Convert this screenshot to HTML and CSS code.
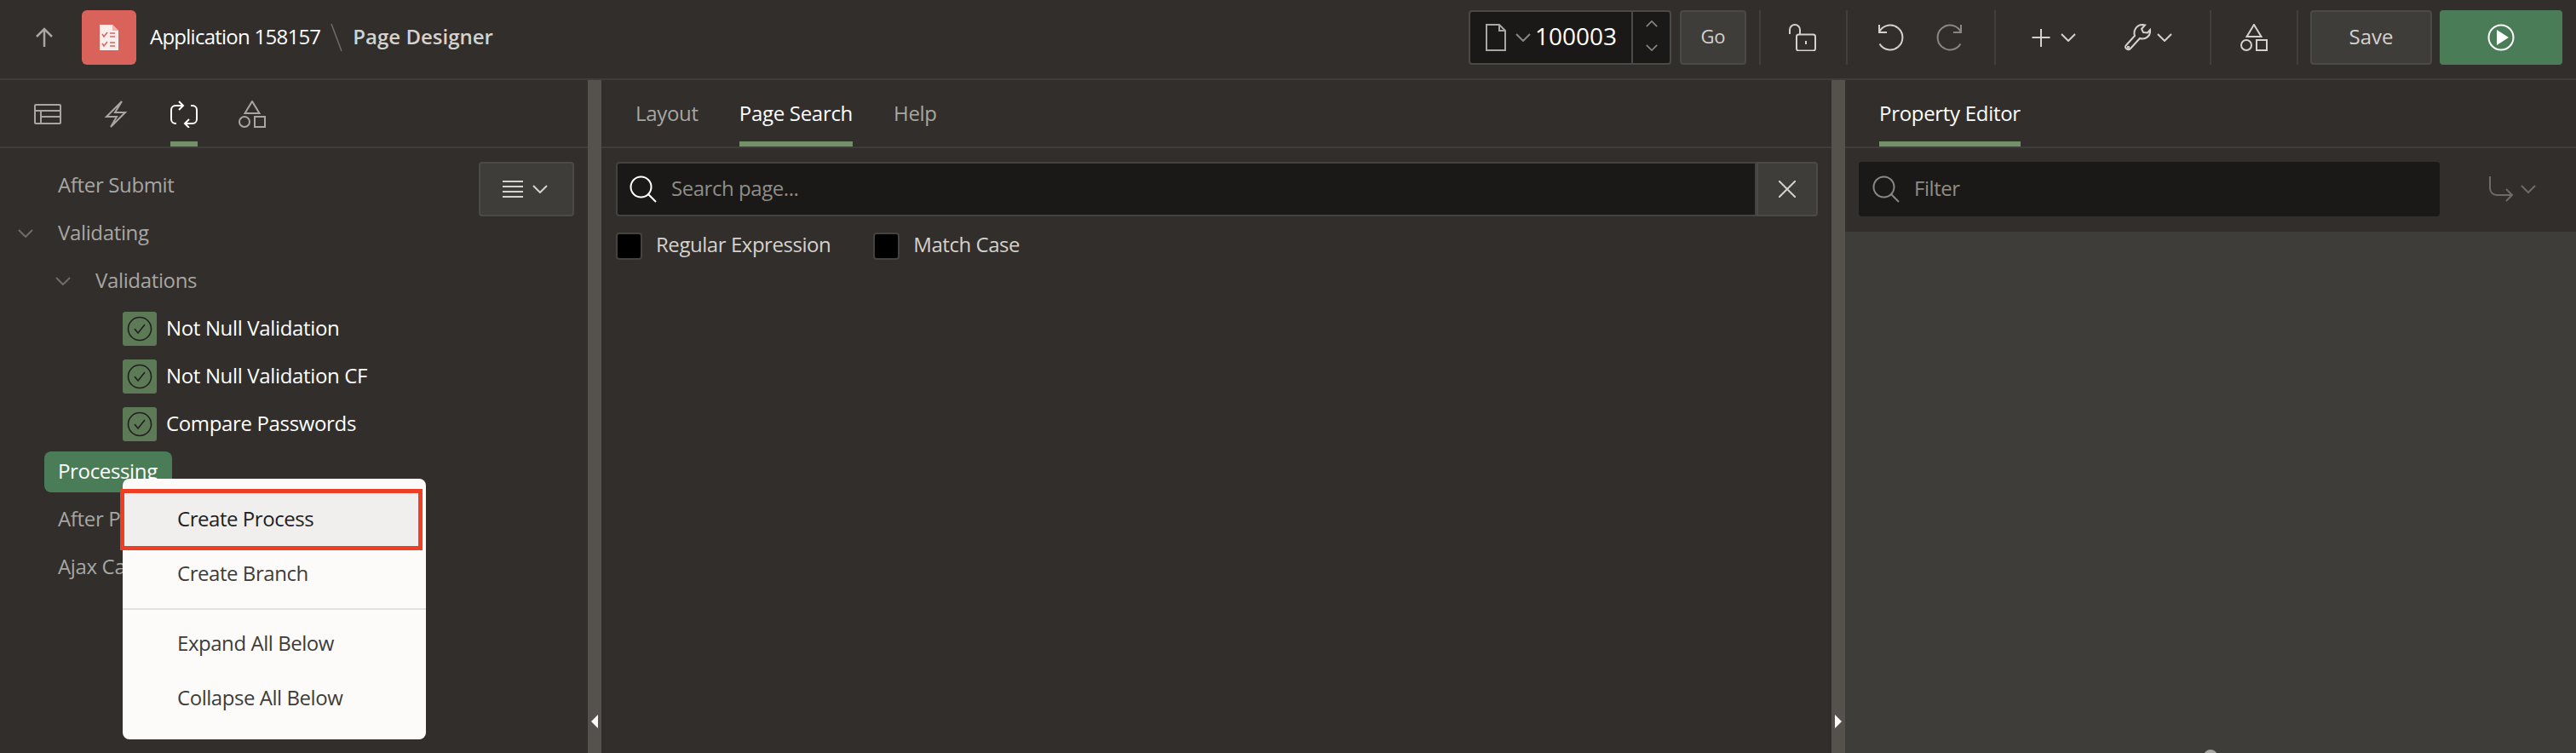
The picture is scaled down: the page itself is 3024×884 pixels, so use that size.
FILE: index.html
```html
<!DOCTYPE html>
<html lang="en">
<head>
  <meta charset="UTF-8">
  <title>Page Designer</title>
  <link rel="stylesheet" href="styles.css">
</head>
<body>

  <svg class="sprite" xmlns="http://www.w3.org/2000/svg">
    <symbol id="chev-down" viewBox="0 0 18 10"><path d="M1 1l8 8 8-8"/></symbol>
    <symbol id="search" viewBox="0 0 32 32"><circle cx="13.5" cy="13.5" r="12"/><path d="M22 22l9 9"/></symbol>
    <symbol id="shapes" viewBox="0 0 32 32"><path d="M16 1l8.500 14h-17z"/><circle cx="7" cy="25" r="6"/><rect x="19" y="19" width="12" height="12"/></symbol>
  </svg>

  <!-- top bar -->
  <header class="topbar">
    <svg class="ico up-arrow" viewBox="0 0 32 32"><path d="M16 6v21M7 15l9-9 9 9"/></svg>
    <div class="app-logo">
      <svg width="24" height="32" viewBox="0 0 24 32">
        <path class="logo-page" d="M1 1h15l7 7v23H1z"/>
        <path class="logo-fold" d="M16 1l7 7h-7z"/>
        <path class="logo-mark" d="M4 12l2 3 4-5M4 23l2 3 4-5M13 11h6M13 15h6M13 22h6M13 26h6"/>
      </svg>
    </div>
    <a class="crumb lbl">Application 158157</a>
    <svg class="crumb-sep" viewBox="0 0 14 32"><path d="M1 0l12 32"/></svg>
    <span class="crumb-current lbl">Page Designer</span>

    <div class="toolbar">
      <div class="page-select">
        <svg class="ico doc-ico" viewBox="0 0 24 32"><path d="M1 1h15l7 7v23H1zM16 1v7h7"/></svg>
        <svg class="chev"><use href="#chev-down"/></svg>
        <span class="page-num lbl">100003</span>
        <div class="stepper">
          <svg class="chev-sm up"><use href="#chev-down"/></svg>
          <svg class="chev-sm"><use href="#chev-down"/></svg>
        </div>
      </div>
      <button class="btn btn-go"><span class="lbl">Go</span></button>
      <span class="tool-sep first"></span>
      <div class="tool tool-lock">
        <svg class="ico" viewBox="0 0 32 32"><path d="M1 12V7a6 6 0 0 1 12 0v5"/><rect x="9" y="12.500" width="22" height="19" rx="2.500"/><path d="M20 20v4"/></svg>
      </div>
      <span class="tool-sep"></span>
      <div class="tool tool-undo">
        <svg class="ico" viewBox="0 0 32 32"><path d="M3 1v9h9"/><path d="M3.500 8.500A14.500 14.500 0 1 1 3.500 23.500"/></svg>
      </div>
      <div class="tool tool-redo">
        <svg class="ico dim" viewBox="0 0 32 32"><path d="M29 1v9h-9"/><path d="M28.500 8.500A14.500 14.500 0 1 0 28.500 23.500"/></svg>
      </div>
      <span class="tool-sep"></span>
      <div class="tool tool-add">
        <svg class="ico" viewBox="0 0 32 32"><path d="M16 6v21M5.500 16h21"/></svg>
        <svg class="chev"><use href="#chev-down"/></svg>
      </div>
      <div class="tool tool-wrench">
        <svg class="ico" viewBox="0 0 32 32"><path d="M3 25l10-11c-2-6 2-13 9-13l3 .5-4 4.500 2 4 5 .5 3-3.500c1 7-5 12-12 10L8 29c-3 3-8-1-5-4z"/><circle cx="5.500" cy="27.500" r=".8"/></svg>
        <svg class="chev"><use href="#chev-down"/></svg>
      </div>
      <span class="tool-sep"></span>
      <div class="tool tool-shapes">
        <svg class="ico"><use href="#shapes"/></svg>
      </div>
      <span class="tool-sep"></span>
      <button class="btn btn-save"><span class="lbl">Save</span></button>
      <button class="btn btn-run">
        <svg width="32" height="32" viewBox="0 0 32 32"><circle class="run-ring" cx="16" cy="16" r="14.500"/><path class="run-tri" d="M11 7l14 9-14 9z"/></svg>
      </button>
    </div>
  </header>

  <main class="designer">

    <!-- left panel -->
    <section class="panel panel-left">
      <div class="tabs">
        <div class="tab tab-ico">
          <svg class="ico" viewBox="0 0 32 24"><rect x="1" y="1" width="30" height="22" rx="1"/><path d="M1 8h30M8 8v15M8 15h23"/></svg>
        </div>
        <div class="tab tab-ico">
          <svg class="ico" viewBox="0 0 24 32"><path d="M19 1L1 19h12L6 31l17-17H11z"/></svg>
        </div>
        <div class="tab tab-ico active">
          <svg class="ico ico-on" viewBox="0 0 32 32"><path d="M15 6H6a5 5 0 0 0-5 5v11a5 5 0 0 0 5 5h1M10 1l5 5-5 5M24 6h2a5 5 0 0 1 5 5v11a5 5 0 0 1-5 5h-9M22 22l-5 5 5 5"/></svg>
        </div>
        <div class="tab tab-ico">
          <svg class="ico"><use href="#shapes"/></svg>
        </div>
      </div>

      <div class="tree">
        <div class="tree-row lvl0"><span class="lbl">After Submit</span></div>
        <div class="tree-row lvl0 has-kids"><svg class="chev tree-chev"><use href="#chev-down"/></svg><span class="lbl">Validating</span></div>
        <div class="tree-row lvl1"><svg class="chev tree-chev"><use href="#chev-down"/></svg><span class="lbl">Validations</span></div>
        <div class="tree-row lvl2">
          <span class="val-ico"><svg viewBox="0 0 30 30" width="30" height="30"><circle cx="15" cy="15" r="13.500"/><path d="M9 15l4 5 8-10"/></svg></span><span class="lbl">Not Null Validation</span>
        </div>
        <div class="tree-row lvl2">
          <span class="val-ico"><svg viewBox="0 0 30 30" width="30" height="30"><circle cx="15" cy="15" r="13.500"/><path d="M9 15l4 5 8-10"/></svg></span><span class="lbl">Not Null Validation CF</span>
        </div>
        <div class="tree-row lvl2">
          <span class="val-ico"><svg viewBox="0 0 30 30" width="30" height="30"><circle cx="15" cy="15" r="13.500"/><path d="M9 15l4 5 8-10"/></svg></span><span class="lbl">Compare Passwords</span>
        </div>
        <div class="tree-row"><div class="tree-selected"><span class="lbl">Processing</span></div></div>
        <div class="tree-row lvl0"><span class="lbl">After Processing</span></div>
        <div class="tree-row lvl0"><span class="lbl">Ajax Callbacks</span></div>
      </div>

      <button class="btn tree-menu-btn">
        <svg width="24" height="20" viewBox="0 0 24 20"><path d="M0 1h24M0 7h24M0 13h24M0 19h24"/></svg>
        <svg class="chev"><use href="#chev-down"/></svg>
      </button>

      <div class="ctx-menu">
        <div class="ctx-item focus"><span class="lbl">Create Process</span></div>
        <div class="ctx-item"><span class="lbl">Create Branch</span></div>
        <div class="ctx-divider"></div>
        <div class="ctx-item"><span class="lbl">Expand All Below</span></div>
        <div class="ctx-item"><span class="lbl">Collapse All Below</span></div>
      </div>
    </section>

    <div class="splitter"><span class="arrow-left"></span></div>

    <!-- middle panel -->
    <section class="panel panel-mid">
      <div class="tabs">
        <div class="tab"><span class="lbl">Layout</span></div>
        <div class="tab active"><span class="lbl">Page Search</span></div>
        <div class="tab"><span class="lbl">Help</span></div>
      </div>
      <div class="search-wrap">
        <div class="search-row">
          <div class="search-field">
            <svg class="ico search-ico"><use href="#search"/></svg>
            <span class="placeholder lbl">Search page...</span>
          </div>
          <button class="btn btn-clear">
            <svg class="ico" width="20" height="20" viewBox="0 0 20 20"><path d="M0 0l20 20M20 0L0 20"/></svg>
          </button>
        </div>
        <div class="check-row">
          <label class="check"><span class="check-box"></span><span class="lbl">Regular Expression</span></label>
          <label class="check"><span class="check-box"></span><span class="lbl">Match Case</span></label>
        </div>
      </div>
    </section>

    <div class="splitter"><span class="arrow-right"></span></div>

    <!-- right panel -->
    <section class="panel panel-right">
      <div class="tabs">
        <div class="tab active"><span class="lbl">Property Editor</span></div>
      </div>
      <div class="filter-bar">
        <div class="filter-field">
          <svg class="ico filter-ico"><use href="#search"/></svg>
          <span class="placeholder lbl">Filter</span>
        </div>
        <div class="filter-go">
          <svg class="ico" width="28" height="30" viewBox="0 0 28 30"><path d="M1 0v14a8 8 0 0 0 8 8h18M20 15l7 7-7 7"/></svg>
          <svg class="chev"><use href="#chev-down"/></svg>
        </div>
      </div>
      <div class="prop-body"></div>
      <span class="float-dot"></span>
    </section>

  </main>

</body>
</html>
```

FILE: styles.css
```css
* {
  box-sizing: border-box;
}

html, body {
  margin: 0;
  height: 100%;
  overflow: hidden;
}

body {
  background-color: #312e2b;
  color: #d4d2cf;
  font-family: "Open Sans", "Noto Sans", sans-serif;
  font-size: 24px;
  letter-spacing: -0.45px;
  display: flex;
  flex-direction: column;
}

.sprite {
  display: none;
}

/* the font sits a little low in its line box */
.lbl {
  margin-bottom: 4px;
}

/* Icons */
.ico {
  width: 32px;
  height: 32px;
  fill: none;
  stroke: #d4d2cf;
  stroke-width: 2;
  flex: none;
}

.ico.dim {
  stroke: #8a8884;
}

.chev {
  width: 18px;
  height: 10px;
  fill: none;
  stroke: #d4d2cf;
  stroke-width: 2;
  flex: none;
}

/* Top bar */
.topbar {
  height: 94px;
  flex: none;
  display: flex;
  align-items: center;
  padding: 0 16px 4px 0;
  border-bottom: 2px solid #3f3d39;
}

.up-arrow {
  stroke: #a8a6a2;
  stroke-width: 2.5;
  margin: 0 28px 0 36px;
}

.app-logo {
  width: 64px;
  height: 64px;
  border-radius: 6px;
  background-color: #d9635a;
  display: flex;
  align-items: center;
  justify-content: center;
  margin-right: 16px;
}

.logo-page {
  fill: #fbeeec;
}

.logo-fold {
  fill: #e8b4ae;
}

.logo-mark {
  fill: none;
  stroke: #d9635a;
  stroke-width: 1.5;
}

.crumb {
  color: #fff;
  letter-spacing: -0.75px;
}

.crumb-sep {
  width: 14px;
  height: 32px;
  margin: 0 12px;
  fill: none;
  stroke: #6f6d69;
  stroke-width: 1.5;
}

.crumb-current {
  font-weight: 600;
  letter-spacing: 0;
}

.toolbar {
  margin-left: auto;
  display: flex;
  align-items: center;
  height: 64px;
}

.btn {
  height: 64px;
  border-radius: 4px;
  border: 2px solid #4c4a46;
  background-color: #3f3d39;
  color: #d4d2cf;
  font-family: inherit;
  font-size: 24px;
  padding: 0;
  display: flex;
  align-items: center;
  justify-content: center;
}

.page-select {
  width: 238px;
  height: 64px;
  display: flex;
  align-items: center;
  padding-left: 18px;
  border: 2px solid #4c4a46;
  border-radius: 4px;
  background-color: #1a1917;
}

.doc-ico {
  width: 24px;
  stroke: #a8a6a2;
  margin-right: 11px;
}

.page-select .chev {
  stroke: #8a8884;
  margin-right: 5px;
}

.page-num {
  color: #fff;
  font-size: 28px;
  letter-spacing: 0;
  width: 113px;
}

.stepper {
  align-self: stretch;
  flex: 1;
  border-left: 2px solid #4c4a46;
  padding-bottom: 4px;
  display: flex;
  flex-direction: column;
  align-items: center;
  justify-content: center;
  gap: 20px;
}

.chev-sm {
  width: 14px;
  height: 8px;
  fill: none;
  stroke: #8a8884;
  stroke-width: 2;
}

.chev-sm.up {
  transform: scaleY(-1);
}

.btn-go {
  width: 78px;
  margin-left: 10px;
  font-size: 22px;
}

.tool-sep {
  width: 2px;
  height: 64px;
  background-color: #413f3b;
  flex: none;
}

.tool-sep.first {
  margin-left: 15px;
}

.tool {
  display: flex;
  align-items: center;
  height: 64px;
}

.tool .chev {
  margin-left: 7px;
}

.tool-lock {
  padding: 0 35px 0 33px;
}

.tool-undo {
  padding: 0 20px 0 34px;
}

.tool-redo {
  padding: 0 36px 0 18px;
}

.tool-add {
  padding: 0 0 0 37px;
}

.tool-wrench {
  padding: 0 44px 0 56px;
}

.tool-shapes {
  padding: 0 34px;
}

.btn-save {
  width: 143px;
  margin-left: 14px;
}

.btn-run {
  width: 144px;
  margin-left: 9px;
  border: none;
  background-color: #4a7d57;
}

.run-ring {
  fill: none;
  stroke: #fff;
  stroke-width: 2;
}

.run-tri {
  fill: #fff;
}

/* Panels */
.designer {
  flex: 1;
  display: flex;
  min-height: 0;
}

.panel {
  position: relative;
  display: flex;
  flex-direction: column;
}

.panel-left {
  width: 690px;
}

.panel-mid {
  width: 1444px;
}

.panel-right {
  flex: 1;
}

.splitter {
  width: 16px;
  flex: none;
  background-color: #55524e;
  display: flex;
  align-items: flex-end;
  justify-content: center;
  padding-bottom: 29px;
}

.arrow-left {
  border-style: solid;
  border-width: 8px 8px 8px 0;
  border-color: transparent #fcfbfa transparent transparent;
}

.arrow-right {
  border-style: solid;
  border-width: 8px 0 8px 8px;
  border-color: transparent transparent transparent #fcfbfa;
}

/* Tabs */
.tabs {
  height: 80px;
  flex: none;
  display: flex;
  gap: 48px;
  padding-left: 40px;
  letter-spacing: -0.3px;
  border-bottom: 2px solid #3f3d39;
}

.tab {
  height: 78px;
  padding-top: 8px;
  display: flex;
  align-items: center;
  justify-content: center;
  color: #a8a6a2;
  border-bottom: 6px solid transparent;
}

.tab.active {
  color: #fff;
  border-bottom-color: #739069;
}

.tab-ico .ico {
  stroke: #a8a6a2;
}

.tab-ico .ico-on {
  stroke: #fff;
}

/* Tree */
.tree {
  padding-top: 16px;
  letter-spacing: -0.35px;
}

.tree-row {
  height: 56px;
  display: flex;
  align-items: center;
  color: #a8a6a2;
}

.tree-row.lvl0 {
  padding-left: 68px;
}

.tree-row.has-kids {
  padding-left: 21px;
}

.tree-row.lvl1 {
  padding-left: 65px;
}

.tree-row.lvl2 {
  padding-left: 144px;
  color: #fff;
}

.tree-chev {
  stroke: #6f6d69;
  margin-right: 29px;
}

.val-ico {
  width: 40px;
  height: 40px;
  margin-right: 11px;
  border-radius: 3px;
  background-color: #5b7a55;
  display: flex;
  align-items: center;
  justify-content: center;
}

.val-ico svg {
  fill: none;
  stroke: #22201e;
  stroke-width: 1.6;
}

.tree-selected {
  margin-left: 52px;
  width: 150px;
  height: 48px;
  padding-left: 16px;
  border-radius: 8px;
  background-color: #4a7d57;
  color: #fff;
  display: flex;
  align-items: center;
}

.tree-menu-btn {
  position: absolute;
  top: 96px;
  left: 562px;
  width: 112px;
  padding-right: 3px;
  gap: 11px;
}

.tree-menu-btn path {
  fill: none;
  stroke: #d4d2cf;
  stroke-width: 2;
}

/* Context menu */
.ctx-menu {
  position: absolute;
  top: 468px;
  left: 144px;
  width: 356px;
  padding: 16px 0;
  border-radius: 8px;
  background-color: #fcfbfa;
  color: #3e3c38;
}

.ctx-item {
  height: 64px;
  padding-left: 64px;
  display: flex;
  align-items: center;
}

.ctx-item.focus {
  color: #22201e;
  background-color: #f1efed;
  outline: 5px solid #ec3f23;
  outline-offset: -1px;
  margin: 0 8px 0 1px;
  padding-left: 63px;
}

.ctx-divider {
  height: 2px;
  margin: 8px 0;
  background-color: #e4e2df;
}

/* Search */
.search-wrap {
  padding: 16px 16px 0 17px;
}

.search-row {
  display: flex;
}

.search-field {
  flex: 1;
  height: 64px;
  display: flex;
  align-items: center;
  padding-left: 14px;
  border: 2px solid #45433f;
  border-radius: 4px 0 0 4px;
  background-color: #1a1917;
}

.search-ico {
  stroke: #fff;
  margin-right: 17px;
}

.placeholder {
  color: #8f8d88;
}

.btn-clear {
  width: 72px;
  border-radius: 0 4px 4px 0;
}

.btn-clear .ico {
  width: 20px;
  height: 20px;
}

.check-row {
  display: flex;
  gap: 50px;
  margin-top: 16px;
}

.check {
  display: flex;
  align-items: center;
  gap: 16px;
}

.check-box {
  width: 31px;
  height: 32px;
  border: 2px solid #45433f;
  border-radius: 4px;
  background-color: #000;
}

/* Property editor */
.filter-bar {
  height: 98px;
  flex: none;
  display: flex;
  align-items: center;
  padding: 0 0 2px 16px;
}

.filter-field {
  width: 682px;
  height: 64px;
  display: flex;
  align-items: center;
  padding-left: 16px;
  border-radius: 4px;
  background-color: #1a1917;
}

.filter-ico {
  stroke: #8a8884;
  margin-right: 17px;
}

.filter-go {
  display: flex;
  align-items: center;
  margin-left: 58px;
  gap: 9px;
}

.filter-go .ico {
  width: 28px;
  height: 30px;
  stroke: #6e6c68;
}

.filter-go .chev {
  stroke: #6e6c68;
}

.prop-body {
  flex: 1;
  background-color: #3f3d39;
}

.float-dot {
  position: absolute;
  top: 786px;
  left: 421px;
  width: 16px;
  height: 16px;
  border-radius: 50%;
  background-color: #a8a6a2;
}
```
